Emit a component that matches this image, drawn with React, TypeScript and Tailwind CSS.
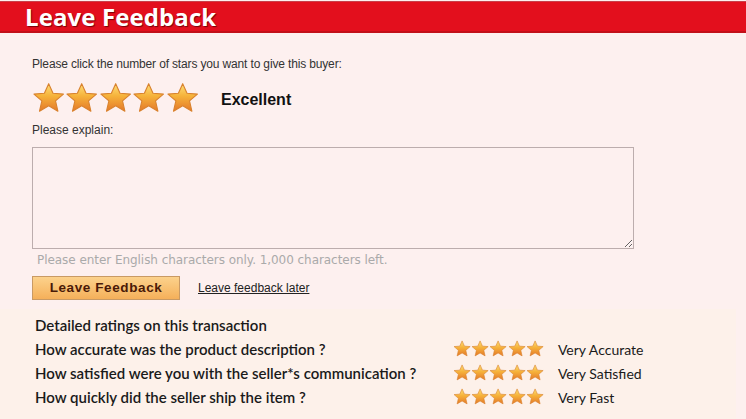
import React from "react";

function Star({ size, id }: { size: number; id: string }) {
  return (
    <svg width={size} height={size} viewBox="0 0 24 24" className="block">
      <defs>
        <linearGradient id={id} x1="0" y1="0" x2="0" y2="1">
          <stop offset="0" stopColor="#fde07a" />
          <stop offset="0.45" stopColor="#f6b23a" />
          <stop offset="1" stopColor="#e4782a" />
        </linearGradient>
      </defs>
      <path
        d="M12 1.2 L15.1 8.1 L22.6 8.7 L16.9 13.6 L18.6 21 L12 17.1 L5.4 21 L7.1 13.6 L1.4 8.7 L8.9 8.1 Z"
        fill={`url(#${id})`}
        stroke="#d9822e"
        strokeWidth="0.8"
        strokeLinejoin="round"
      />
    </svg>
  );
}

function StarRow({ size, prefix }: { size: number; prefix: string }) {
  return (
    <div className="flex">
      {[0, 1, 2, 3, 4].map((i) => (
        <Star key={i} size={size} id={`${prefix}${i}`} />
      ))}
    </div>
  );
}

const rows = [
  { q: "How accurate was the product description ?", a: "Very Accurate" },
  { q: "How satisfied were you with the seller*s communication ?", a: "Very Satisfied" },
  { q: "How quickly did the seller ship the item ?", a: "Very Fast" },
];

export default function App() {
  return (
    <div className="w-[746px] h-[419px] bg-[#fdf0ef] overflow-hidden flex flex-col">
      <div className="mt-px h-[32px] bg-[#e30f1d] border-t border-t-[#c9404a] border-b-2 border-b-[#c2101a] flex items-center pl-[25px]">
        <span
          className="text-white text-[24px] font-bold leading-none tracking-[0.1px]"
          style={{ fontFamily: '"Open Sans", sans-serif', textShadow: "1px 1px 1px #7a0008" }}
        >
          Leave Feedback
        </span>
      </div>

      <div className="pl-[32px] flex flex-col" style={{ fontFamily: '"Liberation Sans", Arial, sans-serif' }}>
        <div className="mt-[24px] text-[12px] leading-[14px] text-[#333] tracking-[-0.15px]">
          Please click the number of stars you want to give this buyer:
        </div>
        <div className="mt-[11px] flex items-center">
          <StarRow size={33.4} prefix="b" />
          <span className="ml-[22px] mt-[2px] text-[16px] font-bold text-[#111]">Excellent</span>
        </div>
        <div className="mt-[8px] text-[12px] leading-[14px] text-[#333]">Please explain:</div>
        <textarea className="mt-[10px] w-[602px] h-[102px] border border-[#bcadad] bg-[#fdf0ef] resize-y outline-none" />
        <div
          className="mt-[4px] ml-[5px] text-[12px] leading-[14px] text-[#aaa] tracking-[-0.05px]"
          style={{ fontFamily: "Tahoma, 'DejaVu Sans', sans-serif" }}
        >
          Please enter English characters only. 1,000 characters left.
        </div>
        <div className="mt-[9px] flex items-center">
          <button className="w-[148px] h-[24px] border border-[#c99a64] bg-[linear-gradient(#fcd28c,#f5b05a)] text-[13.5px] font-bold text-[#4a1a08] tracking-[0.6px] flex items-center justify-center">
            Leave Feedback
          </button>
          <a className="ml-[18px] text-[12px] text-[#222] underline">Leave feedback later</a>
        </div>
      </div>

      <div
        className="mt-[9px] w-[736px] flex-1 bg-[#fdf1ea] pl-[35px] pt-[4px] text-[15px] text-[#1a1a1a]"
        style={{ fontFamily: 'Lato, "Noto Sans", sans-serif' }}
      >
        <div className="h-[24px] flex items-center font-semibold">Detailed ratings on this transaction</div>
        {rows.map((r, i) => (
          <div key={i} className="h-[24px] flex items-center">
            <span className="w-[418px] font-semibold">{r.q}</span>
            <StarRow size={18.2} prefix={`s${i}`} />
            <span className="ml-[14px] text-[14px]">{r.a}</span>
          </div>
        ))}
      </div>
    </div>
  );
}
